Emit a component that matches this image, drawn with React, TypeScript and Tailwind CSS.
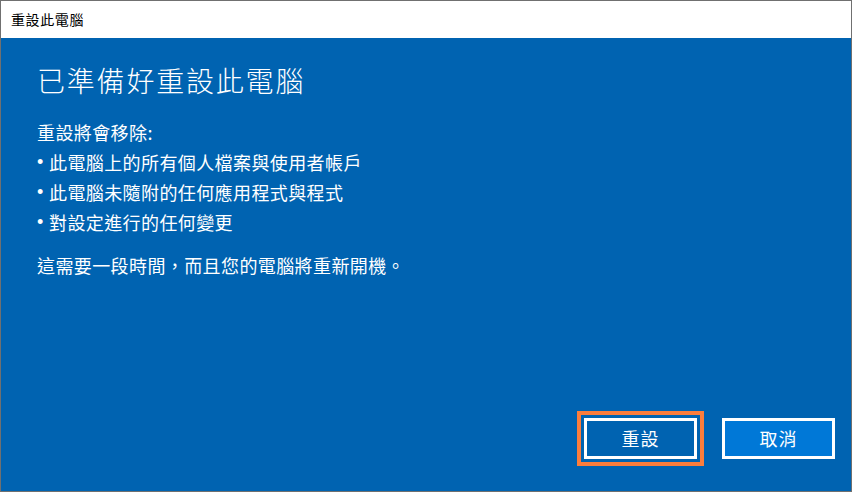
export default function App() {
  const font = { fontFamily: '"Noto Sans CJK TC", "Noto Sans CJK JP", sans-serif' };
  const bullet = (
    <span className="w-[12px] shrink-0 text-[18px]" style={{ fontFamily: '"Liberation Sans", Arial, sans-serif' }}>•</span>
  );
  return (
    <div className="w-[852px] h-[492px] border border-[#707070] bg-[#0063b1] flex flex-col overflow-hidden" style={font}>
      <div className="h-[37px] bg-white flex items-center pl-[10px] text-[14px] tracking-[0.6px] text-black shrink-0">重設此電腦</div>
      <div className="flex-1 flex flex-col pl-[36px] text-white">
        <div className="mt-[24px] text-[28px] leading-[36px] tracking-[1.8px] font-light">已準備好重設此電腦</div>
        <div className="mt-[19px] flex flex-col text-[18px] leading-[30px] tracking-[0.4px]">
          <div>重設將會移除:</div>
          <div className="flex">{bullet}<span>此電腦上的所有個人檔案與使用者帳戶</span></div>
          <div className="flex">{bullet}<span>此電腦未隨附的任何應用程式與程式</span></div>
          <div className="flex">{bullet}<span>對設定進行的任何變更</span></div>
          <div className="mt-[13px]">這需要一段時間，而且您的電腦將重新開機。</div>
        </div>
        <div className="flex-1" />
        <div className="flex justify-end items-center pr-[16px] mb-[25px] gap-[18px]">
          <div className="border-[4px] border-[#fb7d3c] p-[3px]">
            <button className="w-[113px] h-[41px] border-[3px] border-white bg-[#0063b1] text-white text-[18px] tracking-[1px]" style={font}>重設</button>
          </div>
          <button className="w-[113px] h-[41px] border-[3px] border-white bg-[#0078d7] text-white text-[18px] tracking-[1px]" style={font}>取消</button>
        </div>
      </div>
    </div>
  );
}
